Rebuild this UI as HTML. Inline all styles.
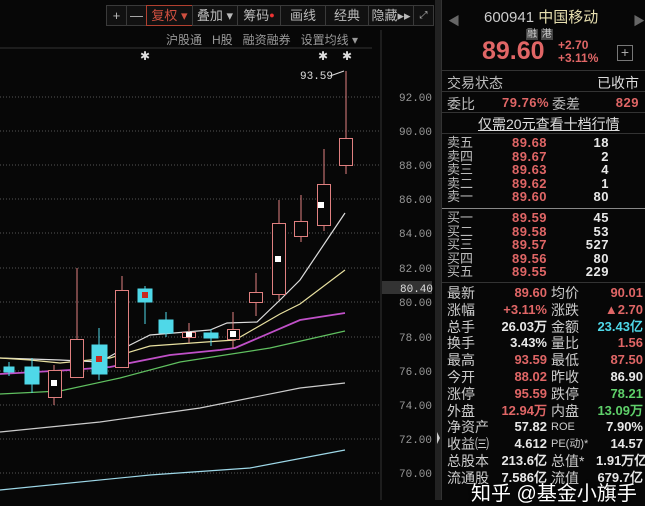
<!DOCTYPE html>
<html><head><meta charset="utf-8"><style>
*{margin:0;padding:0;box-sizing:border-box}
body{width:645px;height:500px;background:#070707;overflow:hidden;position:relative;font-family:"Liberation Sans","Noto Sans CJK SC",sans-serif;color:#ccc}
.a{position:absolute;white-space:nowrap}
.tb{position:absolute;top:5px;height:21px;border:1px solid #3a3a3a;background:#111;color:#bbb;font-size:13px;line-height:19px;text-align:center}
.r{color:#e06666}.w{color:#e8e8e8}.g{color:#5fd06a}.c{color:#4fd8e8}
.lab{font-size:14px;color:#bbb}
.num{font-family:"Liberation Sans",sans-serif;font-weight:bold;font-size:13px;letter-spacing:0.5px}
.st .num{font-size:13px;letter-spacing:0}
</style></head><body>
<svg class="a" style="left:0;top:0" width="441" height="500">
<g stroke="#555" stroke-dasharray="1 2" stroke-width="1">
<line x1="0" y1="97" x2="381" y2="97"/><line x1="0" y1="131" x2="381" y2="131"/><line x1="0" y1="165" x2="381" y2="165"/><line x1="0" y1="199" x2="381" y2="199"/><line x1="0" y1="233" x2="381" y2="233"/><line x1="0" y1="268" x2="381" y2="268"/><line x1="0" y1="302" x2="381" y2="302"/><line x1="0" y1="337" x2="381" y2="337"/><line x1="0" y1="371" x2="381" y2="371"/><line x1="0" y1="405" x2="381" y2="405"/><line x1="0" y1="439" x2="381" y2="439"/><line x1="0" y1="473" x2="381" y2="473"/>
</g>
<line x1="0" y1="48" x2="372" y2="48" stroke="#333"/>
<line x1="381" y1="30" x2="381" y2="500" stroke="#333"/>
<rect x="435" y="0" width="6" height="500" fill="#222"/>
<polygon points="437,432 440,438 437,444" fill="#ccc"/>
<g fill="none" stroke-width="1.2">
<polyline stroke="#ddd" points="0,358 60,360 100,362 130,345 150,335 210,330 227,323 257,322 280,300 300,280 345,213"/>
<polyline stroke="#e8e0a0" points="0,358 30,360 60,363 110,358 150,346 220,341 235,340 280,314 300,304 345,270"/>
<polyline stroke="#c050c8" stroke-width="1.8" points="0,374 70,370 110,367 170,355 220,350 235,348 300,320 345,313"/>
<polyline stroke="#60c060" points="0,394 60,391 120,378 180,362 270,348 345,331"/>
<polyline stroke="#ccc" points="0,432 100,422 200,408 300,388 345,383"/>
<polyline stroke="#9ed8e8" points="0,490 150,475 250,468 345,450"/>
</g>
<g stroke="#e08080" stroke-width="1" fill="#070707">
<line x1="77" y1="268" x2="77" y2="339"/><rect x="70.5" y="339.5" width="13" height="38"/>
<line x1="122" y1="276" x2="122" y2="290"/><rect x="115.5" y="290.5" width="13" height="77"/>
<line x1="54" y1="365" x2="54" y2="405"/><rect x="48.5" y="370.5" width="13" height="27"/>
<line x1="189" y1="323" x2="189" y2="343"/><rect x="182.5" y="332.5" width="13" height="5"/>
<line x1="233" y1="312" x2="233" y2="348"/><rect x="227.5" y="329.5" width="12" height="10"/>
<line x1="256" y1="273" x2="256" y2="316"/><rect x="249.5" y="292.5" width="13" height="10"/>
<line x1="279" y1="200" x2="279" y2="300"/><rect x="272.5" y="223.5" width="13" height="71"/>
<line x1="301" y1="195" x2="301" y2="242"/><rect x="294.5" y="221.5" width="13" height="15"/>
<line x1="324" y1="149" x2="324" y2="231"/><rect x="317.5" y="184.5" width="13" height="41"/>
<line x1="346" y1="71" x2="346" y2="174"/><rect x="339.5" y="138.5" width="13" height="27"/>
</g>
<g stroke="#4fd8e8" fill="#4fd8e8">
<line x1="32" y1="358" x2="32" y2="393"/><rect x="25" y="367" width="14" height="17"/>
<line x1="99" y1="328" x2="99" y2="380"/><rect x="92" y="345" width="15" height="29"/>
<line x1="145" y1="286" x2="145" y2="324"/><rect x="138" y="289" width="14" height="13"/>
<line x1="166" y1="312" x2="166" y2="337"/><rect x="159" y="320" width="14" height="13"/>
<line x1="211" y1="329" x2="211" y2="346"/><rect x="204" y="333" width="14" height="5"/>
<line x1="9" y1="362" x2="9" y2="376"/><rect x="4" y="367" width="10" height="5"/>
</g>
<g fill="#c8281e"><rect x="96" y="356" width="6" height="6"/><rect x="142" y="292" width="6" height="6"/></g>
<g fill="#fff"><rect x="51" y="380" width="6" height="6"/><rect x="186" y="332" width="6" height="5"/><rect x="230" y="331" width="6" height="6"/><rect x="275" y="256" width="6" height="6"/><rect x="318" y="202" width="6" height="6"/></g>
<text x="300" y="79" fill="#ddd" font-size="11" font-family="Liberation Mono">93.59</text>
<line x1="330" y1="76" x2="344" y2="71" stroke="#ddd"/>
<g fill="#ddd" font-size="12"><text x="140" y="60">✱</text><text x="318" y="60">✱</text><text x="342" y="60">✱</text></g>
<g fill="#999" font-size="11" font-family="Liberation Mono">
<text x="399" y="101">92.00</text><text x="399" y="135">90.00</text><text x="399" y="169">88.00</text><text x="399" y="203">86.00</text><text x="399" y="237">84.00</text><text x="399" y="272">82.00</text><text x="399" y="306">80.00</text><text x="399" y="341">78.00</text><text x="399" y="375">76.00</text><text x="399" y="409">74.00</text><text x="399" y="443">72.00</text><text x="399" y="477">70.00</text>
</g>
<rect x="382" y="281" width="50" height="13" fill="#333"/>
<text x="400" y="292" fill="#ddd" font-size="11" font-family="Liberation Mono">80.40</text>
</svg>
<div class="tb" style="left:106px;width:21px">+</div>
<div class="tb" style="left:126px;width:21px">—</div>
<div class="tb" style="left:146px;width:47px;border-color:#b04030;color:#d05040">复权 ▾</div>
<div class="tb" style="left:192px;width:46px">叠加 ▾</div>
<div class="tb" style="left:237px;width:44px">筹码<span style="color:#e33;font-size:9px;vertical-align:top">●</span></div>
<div class="tb" style="left:280px;width:46px">画线</div>
<div class="tb" style="left:325px;width:44px">经典</div>
<div class="tb" style="left:368px;width:46px">隐藏▸▸</div>
<div class="tb" style="left:413px;width:21px;font-size:10px">⤢</div>
<div class="a" style="left:166px;top:31px;font-size:12px;color:#999">沪股通 &nbsp; H股 &nbsp; 融资融券 &nbsp; 设置均线 ▾</div>

<div class="a" style="left:441px;top:0;width:204px;height:500px;border-left:1px solid #333">
<div class="a" style="left:6px;top:12px;color:#666;font-size:12px">◀</div>
<div class="a" style="left:191px;top:12px;color:#666;font-size:12px">▶</div>
<div class="a" style="left:42px;top:6px;font-size:15px;color:#ccc">600941 <span style="color:#e8e0b0">中国移动</span></div>
<div class="a" style="left:84px;top:25px;font-size:10px;color:#ccc"><span style="background:#444;padding:0 1px">融</span> <span style="background:#444;padding:0 1px">港</span></div>
<div class="a r" style="left:40px;top:37px;font-size:25px;font-weight:bold">89.60</div>
<div class="a r" style="left:116px;top:39px;font-size:12px;line-height:13px;font-weight:bold">+2.70<br>+3.11%</div>
<div class="a" style="left:175px;top:45px;width:16px;height:16px;border:1px solid #777;color:#aaa;font-size:14px;line-height:13px;text-align:center">+</div>
<div class="a" style="left:0;top:70px;width:204px;border-top:1px solid #333"></div>
<div class="a lab" style="left:5px;top:73px">交易状态</div><div class="a lab" style="right:6px;top:73px;color:#ddd">已收市</div>
<div class="a" style="left:0;top:91px;width:204px;border-top:1px solid #333"></div>
<div class="a lab" style="left:5px;top:94px">委比</div><div class="a r num" style="left:60px;top:95px">79.76%</div>
<div class="a lab" style="left:110px;top:94px">委差</div><div class="a r num" style="right:6px;top:95px">829</div>
<div class="a" style="left:0;top:112px;width:204px;border-top:1px solid #333"></div>
<div class="a" style="left:36px;top:114px;font-size:14px;color:#ddd;text-decoration:underline">仅需20元查看十档行情</div>
<div class="a" style="left:0;top:133px;width:204px;border-top:1px solid #333"></div>
<div class="a" style="left:5px;top:136px;width:196px;font-size:13px;line-height:13.5px">
<div style="display:flex"><span style="width:65px;color:#bbb">卖五</span><span class="r num" style="width:60px">89.68</span><span class="w num" style="width:37px;text-align:right">18</span></div>
<div style="display:flex"><span style="width:65px;color:#bbb">卖四</span><span class="r num" style="width:60px">89.67</span><span class="w num" style="width:37px;text-align:right">2</span></div>
<div style="display:flex"><span style="width:65px;color:#bbb">卖三</span><span class="r num" style="width:60px">89.63</span><span class="w num" style="width:37px;text-align:right">4</span></div>
<div style="display:flex"><span style="width:65px;color:#bbb">卖二</span><span class="r num" style="width:60px">89.62</span><span class="w num" style="width:37px;text-align:right">1</span></div>
<div style="display:flex"><span style="width:65px;color:#bbb">卖一</span><span class="r num" style="width:60px">89.60</span><span class="w num" style="width:37px;text-align:right">80</span></div>
</div>
<div class="a" style="left:0;top:208px;width:204px;border-top:1px solid #888"></div>
<div class="a" style="left:5px;top:211px;width:196px;font-size:13px;line-height:13.5px">
<div style="display:flex"><span style="width:65px;color:#bbb">买一</span><span class="r num" style="width:60px">89.59</span><span class="w num" style="width:37px;text-align:right">45</span></div>
<div style="display:flex"><span style="width:65px;color:#bbb">买二</span><span class="r num" style="width:60px">89.58</span><span class="w num" style="width:37px;text-align:right">53</span></div>
<div style="display:flex"><span style="width:65px;color:#bbb">买三</span><span class="r num" style="width:60px">89.57</span><span class="w num" style="width:37px;text-align:right">527</span></div>
<div style="display:flex"><span style="width:65px;color:#bbb">买四</span><span class="r num" style="width:60px">89.56</span><span class="w num" style="width:37px;text-align:right">80</span></div>
<div style="display:flex"><span style="width:65px;color:#bbb">买五</span><span class="r num" style="width:60px">89.55</span><span class="w num" style="width:37px;text-align:right">229</span></div>
</div>
<div class="a" style="left:0;top:282px;width:204px;border-top:1px solid #333"></div>
<div class="a st" style="left:5px;top:285px;width:196px;font-size:14px;line-height:16.8px">
<div style="display:flex"><span style="width:45px">最新</span><span class="r num" style="width:55px;text-align:right">89.60</span><span style="width:45px;margin-left:4px">均价</span><span class="r num" style="width:47px;text-align:right">90.01</span></div>
<div style="display:flex"><span style="width:45px">涨幅</span><span class="r num" style="width:55px;text-align:right">+3.11%</span><span style="width:45px;margin-left:4px">涨跌</span><span class="r num" style="width:47px;text-align:right">▲2.70</span></div>
<div style="display:flex"><span style="width:45px">总手</span><span class="w num" style="width:55px;text-align:right">26.03万</span><span style="width:45px;margin-left:4px">金额</span><span class="c num" style="width:47px;text-align:right">23.43亿</span></div>
<div style="display:flex"><span style="width:45px">换手</span><span class="w num" style="width:55px;text-align:right">3.43%</span><span style="width:45px;margin-left:4px">量比</span><span class="r num" style="width:47px;text-align:right">1.56</span></div>
<div style="display:flex"><span style="width:45px">最高</span><span class="r num" style="width:55px;text-align:right">93.59</span><span style="width:45px;margin-left:4px">最低</span><span class="r num" style="width:47px;text-align:right">87.50</span></div>
<div style="display:flex"><span style="width:45px">今开</span><span class="r num" style="width:55px;text-align:right">88.02</span><span style="width:45px;margin-left:4px">昨收</span><span class="w num" style="width:47px;text-align:right">86.90</span></div>
<div style="display:flex"><span style="width:45px">涨停</span><span class="r num" style="width:55px;text-align:right">95.59</span><span style="width:45px;margin-left:4px">跌停</span><span class="g num" style="width:47px;text-align:right">78.21</span></div>
<div style="display:flex"><span style="width:45px">外盘</span><span class="r num" style="width:55px;text-align:right">12.94万</span><span style="width:45px;margin-left:4px">内盘</span><span class="g num" style="width:47px;text-align:right">13.09万</span></div>
<div style="display:flex"><span style="width:45px">净资产</span><span class="w num" style="width:55px;text-align:right">57.82</span><span style="width:45px;margin-left:4px;font-size:11px">ROE</span><span class="w num" style="width:47px;text-align:right">7.90%</span></div>
<div style="display:flex"><span style="width:45px">收益㈢</span><span class="w num" style="width:55px;text-align:right">4.612</span><span style="width:45px;margin-left:4px;font-size:11px">PE(动)*</span><span class="w num" style="width:47px;text-align:right">14.57</span></div>
<div style="display:flex"><span style="width:45px">总股本</span><span class="w num" style="width:55px;text-align:right">213.6亿</span><span style="width:45px;margin-left:4px">总值*</span><span class="w num" style="width:47px;text-align:right">1.91万亿</span></div>
<div style="display:flex"><span style="width:45px">流通股</span><span class="w num" style="width:55px;text-align:right">7.586亿</span><span style="width:45px;margin-left:4px">流值</span><span class="w num" style="width:47px;text-align:right">679.7亿</span></div>
</div>
</div>
<div class="a" style="left:471px;top:477px;font-size:20px;color:#fff;text-shadow:0 0 3px #000">知乎 @基金小旗手</div>
</body></html>
